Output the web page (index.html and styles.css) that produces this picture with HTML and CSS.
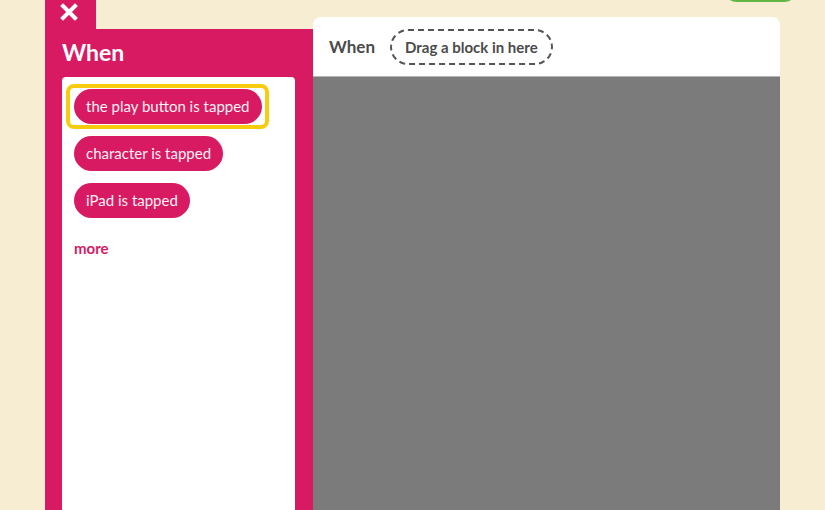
FILE: index.html
```html
<!DOCTYPE html>
<html>
<head>
<meta charset="utf-8">
<link rel="stylesheet" href="styles.css">
</head>
<body>
<div class="page">
  <div class="top-button"></div>
  <div class="side">
    <div class="tab">
      <svg class="close" width="18" height="18" viewBox="0 0 18 18"><path d="M3 3 L15 15 M15 3 L3 15" stroke="#fff" stroke-width="4" stroke-linecap="square"/></svg>
    </div>
    <div class="panel">
      <div class="panel-title">When</div>
      <div class="list">
        <div class="selected"><div class="pill">the play button is tapped</div></div>
        <div class="pill pill-second">character is tapped</div>
        <div class="pill pill-third">iPad is tapped</div>
        <div class="more">more</div>
      </div>
    </div>
  </div>
  <div class="editor">
    <div class="editor-head">
      <span class="editor-label">When</span>
      <span class="drop">Drag a block in here</span>
    </div>
    <div class="canvas"></div>
  </div>
</div>
</body>
</html>
```

FILE: styles.css
```css
html, body {
  margin: 0;
  padding: 0;
}
body {
  background: #f6edd3;
  font-family: Lato, "Open Sans", sans-serif;
  overflow: hidden;
}
.page {
  position: relative;
  height: 510px;
  display: flex;
  align-items: flex-start;
  padding-left: 45px;
}
.top-button {
  position: absolute;
  left: 723px;
  top: -30px;
  width: 75px;
  height: 32px;
  border-radius: 14px;
  background: #5fb645;
}
.side {
  width: 268px;
  height: 510px;
  display: flex;
  flex-direction: column;
}
.tab {
  width: 51px;
  height: 29px;
  background: #d81a62;
  display: flex;
  align-items: flex-start;
  justify-content: center;
  padding-top: 3px;
  box-sizing: border-box;
}
.close {
  margin-left: -3px;
}
.panel {
  flex: 1;
  background: #d81a62;
  padding: 9px 18px 0 17px;
  display: flex;
  flex-direction: column;
}
.panel-title {
  color: #fff;
  font-weight: 700;
  font-size: 23px;
  line-height: 28px;
  margin-bottom: 11px;
}
.list {
  flex: 1;
  background: #fff;
  border-radius: 4px 4px 0 0;
  padding: 7px 0 0 4px;
  display: flex;
  flex-direction: column;
  align-items: flex-start;
}
.selected {
  border: 4px solid #f7cc0f;
  border-radius: 8px;
  padding: 1px 3px 1px 4px;
  margin-bottom: 7px;
}
.pill {
  background: #d81a62;
  color: #fdf0f4;
  font-size: 15px;
  height: 35px;
  line-height: 35px;
  padding: 0 12px;
  border-radius: 18px;
  white-space: nowrap;
}
.pill-second,
.pill-third {
  margin-left: 8px;
}
.pill-second {
  margin-bottom: 12px;
}
.more {
  margin: 20px 0 0 8px;
  color: #d81a62;
  font-weight: 700;
  font-size: 15px;
  line-height: 20px;
}
.editor {
  margin-top: 17px;
  width: 467px;
  height: 493px;
  display: flex;
  flex-direction: column;
  border-radius: 8px 8px 0 0;
  overflow: hidden;
}
.editor-head {
  height: 60px;
  background: #fff;
  display: flex;
  align-items: center;
  padding-left: 16px;
  border-bottom: 1px solid #b4b4b4;
  box-sizing: border-box;
}
.editor-label {
  color: #4b4b4b;
  font-weight: 700;
  font-size: 17px;
  margin-right: 15px;
}
.drop {
  height: 36px;
  box-sizing: border-box;
  border: 2px dashed #555;
  border-radius: 18px;
  padding: 0 13px;
  display: flex;
  align-items: center;
  color: #4b4b4b;
  font-weight: 700;
  font-size: 15px;
}
.canvas {
  flex: 1;
  background: #7b7b7b;
}
```
